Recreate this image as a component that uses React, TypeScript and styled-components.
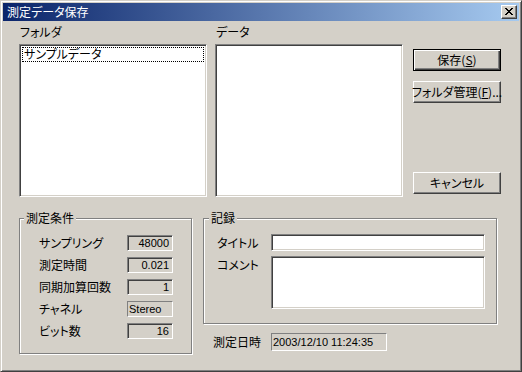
import React from "react";
import styled, { createGlobalStyle } from "styled-components";

const GlobalStyle = createGlobalStyle`
  html, body {
    margin: 0;
    padding: 0;
    background: #d4d0c8;
  }
  body {
    font-family: "Noto Sans CJK JP", sans-serif;
    font-size: 12px;
    font-feature-settings: "palt";
    color: #000;
  }
`;

// 数値フィールド
const conditions = [
  { label: "サンプリング", value: "48000", kind: "num" },
  { label: "測定時間", value: "0.021", kind: "num" },
  { label: "同期加算回数", value: "1", kind: "num" },
  { label: "チャネル", value: "Stereo", kind: "text" },
  { label: "ビット数", value: "16", kind: "num" },
];

const CloseGlyph = () => (
  <svg width="8" height="7" viewBox="0 0 8 7" shapeRendering="crispEdges">
    <path
      fill="#000"
      d="M0 0h2v1H0zM6 0h2v1H6zM1 1h2v1H1zM5 1h2v1H5zM2 2h4v1H2zM3 3h2v1H3zM2 4h4v1H2zM1 5h2v1H1zM5 5h2v1H5zM0 6h2v1H0zM6 6h2v1H6z"
    />
  </svg>
);

export default function App() {
  return (
    <>
      <GlobalStyle />
      <Window>
        <TitleBar>
          <TitleText>測定データ保存</TitleText>
          <CloseButton>
            <CloseGlyph />
          </CloseButton>
        </TitleBar>

        <Body>
          <TopRow>
            <Pane>
              <PaneLabel>フォルダ</PaneLabel>
              <ListBox>
                <ListItem>サンプルデータ</ListItem>
              </ListBox>
            </Pane>
            <Pane $gap={8}>
              <PaneLabel>データ</PaneLabel>
              <ListBox />
            </Pane>
            <ButtonColumn>
              <PushButton $default>
                保存(<u>S</u>)
              </PushButton>
              <PushButton>
                フォルダ管理(<u>F</u>)...
              </PushButton>
              <PushButton $bottom>キャンセル</PushButton>
            </ButtonColumn>
          </TopRow>

          <BottomRow>
            <Group $width={173}>
              <Legend $offset={4}>測定条件</Legend>
              <ConditionGrid>
                {conditions.map((c) => (
                  <React.Fragment key={c.label}>
                    <RowLabel>{c.label}</RowLabel>
                    {c.kind === "num" ? (
                      <NumField>{c.value}</NumField>
                    ) : (
                      <StaticField>{c.value}</StaticField>
                    )}
                  </React.Fragment>
                ))}
              </ConditionGrid>
            </Group>

            <RightColumn>
              <Group $width={294}>
                <Legend $offset={5}>記録</Legend>
                <RecordGrid>
                  <RowLabel>タイトル</RowLabel>
                  <EditBox $height={17} />
                  <RowLabel $top>コメント</RowLabel>
                  <EditBox $height={53} />
                </RecordGrid>
              </Group>
              <DateRow>
                <RowLabel>測定日時</RowLabel>
                <StaticField $width={116} $height={18}>
                  2003/12/10 11:24:35
                </StaticField>
              </DateRow>
            </RightColumn>
          </BottomRow>
        </Body>
      </Window>
    </>
  );
}

// Styled Components
const Window = styled.div`
  width: 522px;
  height: 372px;
  box-sizing: border-box;
  border: 1px solid;
  border-color: #d4d0c8 #404040 #404040 #d4d0c8;
  box-shadow: inset 1px 1px #fff, inset -1px -1px #808080;
  padding: 2px;
  background: #d4d0c8;
  display: flex;
  flex-direction: column;
`;

const TitleBar = styled.div`
  height: 18px;
  flex: none;
  display: flex;
  align-items: center;
  justify-content: space-between;
  padding: 0 2px 0 4px;
  background: linear-gradient(to right, #0a246a, #a6caf0);
`;

const TitleText = styled.span`
  color: #fff;
  font-size: 12px;
  line-height: 16px;
`;

const CloseButton = styled.div`
  width: 16px;
  height: 14px;
  box-sizing: border-box;
  display: flex;
  align-items: center;
  justify-content: center;
  background: #d4d0c8;
  border: 1px solid;
  border-color: #fff #404040 #404040 #fff;
  box-shadow: inset -1px -1px #808080;
  padding: 0 1px 1px 0;
`;

const Body = styled.div`
  flex: 1;
  display: flex;
  flex-direction: column;
  padding: 3px 0 0 16px;
`;

const TopRow = styled.div`
  display: flex;
  align-items: stretch;
`;

const Pane = styled.div<{ $gap?: number }>`
  width: 188px;
  margin-left: ${(p) => p.$gap ?? 0}px;
  display: flex;
  flex-direction: column;
`;

const PaneLabel = styled.div`
  height: 16px;
  line-height: 16px;
  padding-left: 1px;
  margin-bottom: 4px;
`;

const sunken = `
  border: 1px solid;
  border-color: #808080 #fff #fff #808080;
  box-shadow: inset 1px 1px #404040, inset -1px -1px #d4d0c8;
`;

const ListBox = styled.div`
  height: 153px;
  box-sizing: border-box;
  ${sunken}
  background: #fff;
  padding: 2px;
`;

const ListItem = styled.div`
  height: 13px;
  line-height: 12px;
  border: 1px dotted #000;
  padding-left: 1px;
  white-space: nowrap;
`;

const ButtonColumn = styled.div`
  width: 88px;
  margin-left: 10px;
  display: flex;
  flex-direction: column;
  gap: 10px;
  padding: 25px 0 3px;
`;

const PushButton = styled.div<{ $default?: boolean; $bottom?: boolean }>`
  height: 22px;
  box-sizing: border-box;
  display: flex;
  align-items: center;
  justify-content: center;
  background: #d4d0c8;
  white-space: nowrap;
  line-height: 14px;
  margin-top: ${(p) => (p.$bottom ? "auto" : "0")};
  border: 1px solid;
  border-color: ${(p) =>
    p.$default ? "#000" : "#fff #404040 #404040 #fff"};
  box-shadow: ${(p) =>
    p.$default
      ? "inset 1px 1px #fff, inset -1px -1px #404040, inset -2px -2px #808080"
      : "inset -1px -1px #808080"};

  u {
    text-decoration-thickness: 1px;
    text-underline-offset: 1px;
  }
`;

const BottomRow = styled.div`
  display: flex;
  align-items: flex-start;
  margin-top: 13px;
`;

const Group = styled.fieldset<{ $width: number }>`
  width: ${(p) => p.$width}px;
  box-sizing: border-box;
  margin: 0;
  padding: 0;
  border: 1px solid #808080;
  box-shadow: 1px 1px #fff, inset 1px 1px #fff;
  min-width: 0;
`;

const Legend = styled.legend<{ $offset: number }>`
  margin-left: ${(p) => p.$offset}px;
  padding: 0 2px;
  line-height: 16px;
  background: #d4d0c8;
`;

const ConditionGrid = styled.div`
  display: grid;
  grid-template-columns: 88px 46px;
  grid-auto-rows: 16px;
  row-gap: 6px;
  align-items: center;
  padding: 9px 0 14px 19px;
`;

const RowLabel = styled.div<{ $top?: boolean }>`
  line-height: 16px;
  white-space: nowrap;
  align-self: ${(p) => (p.$top ? "start" : "center")};
  margin-top: ${(p) => (p.$top ? "1px" : "0")};
`;

const fieldFont = `
  font-family: "Liberation Sans", "Noto Sans CJK JP", sans-serif;
  font-size: 11px;
  font-feature-settings: normal;
`;

const NumField = styled.div`
  height: 16px;
  box-sizing: border-box;
  ${sunken}
  background: #d4d0c8;
  ${fieldFont}
  line-height: 14px;
  text-align: right;
  padding-right: 3px;
`;

const StaticField = styled.div<{ $width?: number; $height?: number }>`
  width: ${(p) => (p.$width ? `${p.$width}px` : "auto")};
  height: ${(p) => p.$height ?? 16}px;
  box-sizing: border-box;
  border: 1px solid;
  border-color: #808080 #fff #fff #808080;
  ${fieldFont}
  line-height: ${(p) => (p.$height ?? 16) - 2}px;
  padding-left: 1px;
  white-space: nowrap;
`;

const RightColumn = styled.div`
  margin-left: 11px;
  display: flex;
  flex-direction: column;
`;

const RecordGrid = styled.div`
  display: grid;
  grid-template-columns: 54px 214px;
  row-gap: 5px;
  padding: 8px 0 14px 13px;
`;

const EditBox = styled.div<{ $height: number }>`
  height: ${(p) => p.$height}px;
  box-sizing: border-box;
  ${sunken}
  background: #fff;
`;

const DateRow = styled.div`
  display: grid;
  grid-template-columns: 58px auto;
  align-items: center;
  margin-top: 9px;
  padding-left: 10px;
`;
